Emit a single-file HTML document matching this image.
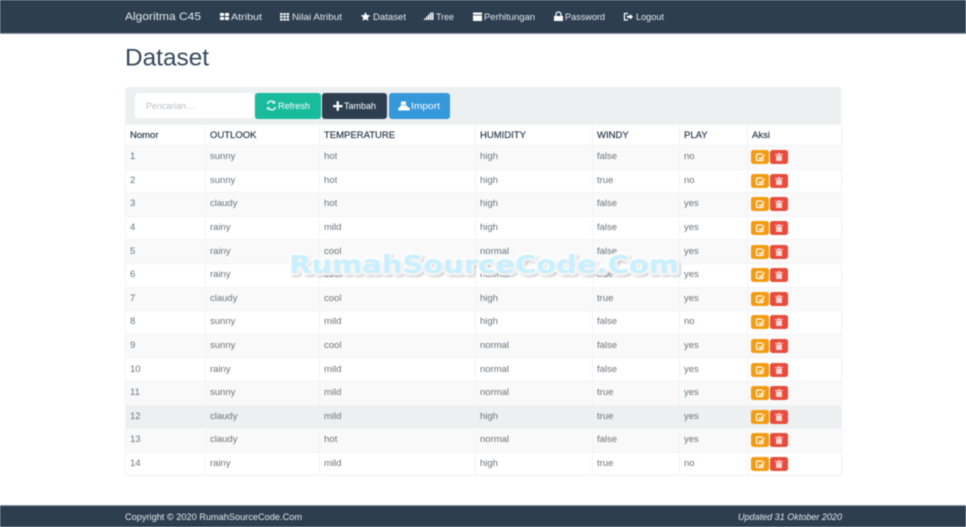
<!DOCTYPE html>
<html>
<head>
<meta charset="utf-8">
<style>
html,body{margin:0;padding:0;background:#fff}
body{width:966px;height:527px;overflow:hidden;position:relative;font-family:"Liberation Sans",sans-serif}
#wrap{position:absolute;left:0;top:0;width:966px;height:527px;filter:blur(.5px)}
.bar{position:absolute;left:0;width:966px;background:#2c3e50}
table{position:absolute;left:125px;top:124px;width:716px;border-collapse:collapse;table-layout:fixed;font-size:9.5px;color:#6a747c}
td,th{padding:0 0 0 4px;border:1px solid #f2f4f5;text-align:left;height:22.6px;line-height:12px;overflow:hidden;white-space:nowrap}
th{color:#2c3e50;font-weight:normal;height:19px;padding-top:1px;-webkit-text-stroke:.2px #2c3e50}
tr:nth-child(even) td{background:#f9f9f9}
tr.h td{background:#ecf0f1!important}
.e,.d{position:relative;display:inline-block;width:18px;height:14px;border-radius:2.500px;vertical-align:middle;top:0}
.e{background:#f39c12;margin-left:-1px}
.d{background:#e74c3c;margin-left:1px}
.e svg,.d svg{position:absolute;left:4px;top:2px}
svg{display:block}
</style>
</head>
<body>
<div id="wrap">
<div class="bar" style="top:0;height:33px;border-bottom:1px solid #8c98a3"></div>
<div class="bar" style="top:505px;height:22px;border-top:1px solid #8c98a3;box-sizing:border-box"></div>

<div style="position:absolute;left:125px;top:87px;width:716px;height:37px;background:#ecf0f1;border-radius:3px 3px 0 0"></div>
<div style="position:absolute;left:135px;top:93px;width:119px;height:25px;background:#fff;border-radius:3px"></div>
<div style="position:absolute;left:255px;top:93px;width:66px;height:25.500px;background:#18bc9c;border-radius:3px"></div>
<div style="position:absolute;left:322px;top:93px;width:65px;height:25.500px;background:#2c3e50;border-radius:3px"></div>
<div style="position:absolute;left:389px;top:93px;width:61px;height:25.500px;background:#3498db;border-radius:3px"></div>

<svg width="0" height="0" style="position:absolute">
<symbol id="ie" viewBox="0 0 10 10"><path d="M7.500 2H2.500Q1.500 2 1.500 3V7.500Q1.500 8.500 2.500 8.500H7Q8 8.500 8 7.500V5.500M4 5.500l1.500 1.500L9.500 2.500" fill="none" stroke="#fff" stroke-width="1.200"/></symbol>
<symbol id="id" viewBox="0 0 10 10"><path d="M1 2h8v1H1zM4 1h2v1H4zM2 3.500h6V9H2z" fill="#fbd5d0"/></symbol>
</svg>

<table>
<colgroup><col style="width:80px"><col style="width:114px"><col style="width:156px"><col style="width:117px"><col style="width:87px"><col style="width:68px"><col style="width:94px"></colgroup>
<tr><th>Nomor</th><th>OUTLOOK</th><th>TEMPERATURE</th><th>HUMIDITY</th><th>WINDY</th><th>PLAY</th><th>Aksi</th></tr>
<tr><td>1</td><td>sunny</td><td>hot</td><td>high</td><td>false</td><td>no</td><td><i class="e"><svg width="10" height="10"><use href="#ie"/></svg></i><i class="d"><svg width="10" height="10"><use href="#id"/></svg></i></td></tr>
<tr><td>2</td><td>sunny</td><td>hot</td><td>high</td><td>true</td><td>no</td><td><i class="e"><svg width="10" height="10"><use href="#ie"/></svg></i><i class="d"><svg width="10" height="10"><use href="#id"/></svg></i></td></tr>
<tr><td>3</td><td>claudy</td><td>hot</td><td>high</td><td>false</td><td>yes</td><td><i class="e"><svg width="10" height="10"><use href="#ie"/></svg></i><i class="d"><svg width="10" height="10"><use href="#id"/></svg></i></td></tr>
<tr><td>4</td><td>rainy</td><td>mild</td><td>high</td><td>false</td><td>yes</td><td><i class="e"><svg width="10" height="10"><use href="#ie"/></svg></i><i class="d"><svg width="10" height="10"><use href="#id"/></svg></i></td></tr>
<tr><td>5</td><td>rainy</td><td>cool</td><td>normal</td><td>false</td><td>yes</td><td><i class="e"><svg width="10" height="10"><use href="#ie"/></svg></i><i class="d"><svg width="10" height="10"><use href="#id"/></svg></i></td></tr>
<tr><td>6</td><td>rainy</td><td>cool</td><td>normal</td><td>true</td><td>yes</td><td><i class="e"><svg width="10" height="10"><use href="#ie"/></svg></i><i class="d"><svg width="10" height="10"><use href="#id"/></svg></i></td></tr>
<tr><td>7</td><td>claudy</td><td>cool</td><td>high</td><td>true</td><td>yes</td><td><i class="e"><svg width="10" height="10"><use href="#ie"/></svg></i><i class="d"><svg width="10" height="10"><use href="#id"/></svg></i></td></tr>
<tr><td>8</td><td>sunny</td><td>mild</td><td>high</td><td>false</td><td>no</td><td><i class="e"><svg width="10" height="10"><use href="#ie"/></svg></i><i class="d"><svg width="10" height="10"><use href="#id"/></svg></i></td></tr>
<tr><td>9</td><td>sunny</td><td>cool</td><td>normal</td><td>false</td><td>yes</td><td><i class="e"><svg width="10" height="10"><use href="#ie"/></svg></i><i class="d"><svg width="10" height="10"><use href="#id"/></svg></i></td></tr>
<tr><td>10</td><td>rainy</td><td>mild</td><td>normal</td><td>false</td><td>yes</td><td><i class="e"><svg width="10" height="10"><use href="#ie"/></svg></i><i class="d"><svg width="10" height="10"><use href="#id"/></svg></i></td></tr>
<tr><td>11</td><td>sunny</td><td>mild</td><td>normal</td><td>true</td><td>yes</td><td><i class="e"><svg width="10" height="10"><use href="#ie"/></svg></i><i class="d"><svg width="10" height="10"><use href="#id"/></svg></i></td></tr>
<tr class="h"><td>12</td><td>claudy</td><td>mild</td><td>high</td><td>true</td><td>yes</td><td><i class="e"><svg width="10" height="10"><use href="#ie"/></svg></i><i class="d"><svg width="10" height="10"><use href="#id"/></svg></i></td></tr>
<tr><td>13</td><td>claudy</td><td>hot</td><td>normal</td><td>false</td><td>yes</td><td><i class="e"><svg width="10" height="10"><use href="#ie"/></svg></i><i class="d"><svg width="10" height="10"><use href="#id"/></svg></i></td></tr>
<tr><td>14</td><td>rainy</td><td>mild</td><td>high</td><td>true</td><td>no</td><td><i class="e"><svg width="10" height="10"><use href="#ie"/></svg></i><i class="d"><svg width="10" height="10"><use href="#id"/></svg></i></td></tr>
</table>

<svg style="position:absolute;left:0;top:0" width="966" height="527" font-family="Liberation Sans, sans-serif">
<g fill="#e6eaed" font-size="9.500">
<text x="125" y="20" font-size="11" textLength="76" lengthAdjust="spacingAndGlyphs">Algoritma C45</text>
<text x="231" y="20" textLength="31" lengthAdjust="spacingAndGlyphs">Atribut</text>
<text x="292" y="20" textLength="50" lengthAdjust="spacingAndGlyphs">Nilai Atribut</text>
<text x="373" y="20" textLength="33" lengthAdjust="spacingAndGlyphs">Dataset</text>
<text x="436" y="20" textLength="18" lengthAdjust="spacingAndGlyphs">Tree</text>
<text x="484" y="20" textLength="51" lengthAdjust="spacingAndGlyphs">Perhitungan</text>
<text x="565" y="20" textLength="40" lengthAdjust="spacingAndGlyphs">Password</text>
<text x="636" y="20" textLength="28" lengthAdjust="spacingAndGlyphs">Logout</text>
</g>
<g fill="#fff">
<path d="M220 13h4v3h-4zM225 13h4v3h-4zM220 17h4v3h-4zM225 17h4v3h-4z"/>
<path d="M280 13h2.500v2h-2.500zM283.300 13h2.500v2h-2.500zM286.600 13h2.500v2h-2.500zM280 15.800h2.500v2h-2.500zM283.300 15.800h2.500v2h-2.500zM286.600 15.800h2.500v2h-2.500zM280 18.600h2.500v2h-2.500zM283.300 18.600h2.500v2h-2.500zM286.600 18.600h2.500v2h-2.500z"/>
<path d="M365.500 12l1.400 3 3.300.4-2.400 2.200.6 3.200-2.900-1.600-2.900 1.600.6-3.200-2.400-2.200 3.300-.4z"/>
<path d="M424 18.500h1.500V20H424zM426 16.500h1.500V20H426zM428 14.500h1.500V20H428zM430 12.500h1.500V20H430zM432 12.500h1.500V20H432z"/>
<path d="M473 12.500h9v2.300h-9zM473 15.500h9V21h-9z"/>
<path d="M554 16h9v5h-9z"/><path d="M556 16v-1.500a2.500 2.500 0 0 1 5 0V16" fill="none" stroke="#fff" stroke-width="1.200"/>
<path d="M628 13.500h-3.500v6.500h3.500" fill="none" stroke="#fff" stroke-width="1.200"/><path d="M627 15.700h3v-1.700l3 2.800-3 2.800v-1.700h-3z"/>
</g>
<text x="125" y="65.500" font-size="24.400" fill="#34485c">Dataset</text>
<text x="146" y="109" font-size="9.500" fill="#b8bfc4" textLength="49" lengthAdjust="spacingAndGlyphs">Pencarian…</text>
<g fill="#fff" font-size="9.500">
<text x="278" y="109" textLength="32" lengthAdjust="spacingAndGlyphs">Refresh</text>
<text x="344" y="109" textLength="32" lengthAdjust="spacingAndGlyphs">Tambah</text>
<text x="411" y="109" textLength="29" lengthAdjust="spacingAndGlyphs">Import</text>
<path d="M333 105h9.500v2.200H333zM336.600 101.300h2.300v9.500h-2.300z"/>
<path d="M401 101.500h5v3.500h-5zM400 105.500h7l.7 2h2v3h-11.400v-3h2z"/>
</g>
<path d="M267.500 104a3.800 3.800 0 0 1 6.600-1.500M275.500 107a3.800 3.800 0 0 1-6.600 1.500" fill="none" stroke="#fff" stroke-width="1.300"/>
<path d="M275 100.800v3h-3zM267 110.200v-3h3z" fill="#fff"/>
<text x="125" y="520" font-size="9.500" fill="#e6eaed" textLength="177" lengthAdjust="spacingAndGlyphs">Copyright © 2020 RumahSourceCode.Com</text>
<text x="738" y="520" font-size="9.500" font-style="italic" fill="#e6eaed" textLength="104" lengthAdjust="spacingAndGlyphs">Updated 31 Oktober 2020</text>
<g font-family="DejaVu Sans, sans-serif" font-weight="bold" font-size="25">
<g style="filter:blur(1.200px)" opacity=".6">
<text x="291" y="275" fill="#999" stroke="#999" stroke-width="3" stroke-linejoin="round" textLength="390" lengthAdjust="spacingAndGlyphs">RumahSourceCode.Com</text>
</g>
<text x="289" y="273" fill="#fff" stroke="#fff" stroke-width="5" stroke-linejoin="round" opacity=".8" textLength="390" lengthAdjust="spacingAndGlyphs">RumahSourceCode.Com</text>
<text x="289" y="273" fill="#c8f0ff" textLength="390" lengthAdjust="spacingAndGlyphs">RumahSourceCode.Com</text>
</g>
</svg>
</div>
</body>
</html>
